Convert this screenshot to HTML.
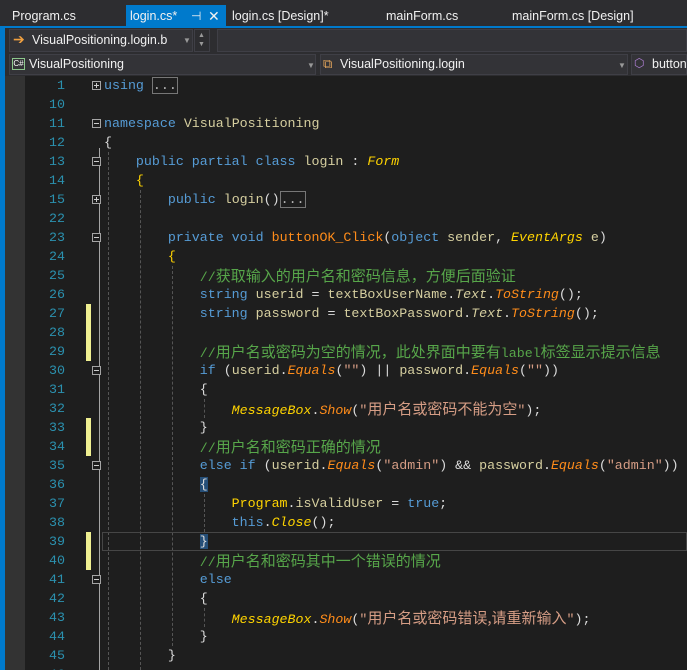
<!DOCTYPE html>
<html style="width:687px;height:670px;overflow:hidden"><head><meta charset="utf-8"><style>
*{margin:0;padding:0;box-sizing:border-box}
body{width:687px;height:670px;overflow:hidden;background:#1e1e1e;position:relative;font-family:"Liberation Sans","Noto Sans CJK SC",sans-serif}
.a{position:absolute}
.tab{position:absolute;top:5px;height:22px;font-size:12.5px;color:#f1f1f1;line-height:22px;white-space:nowrap}
.ln{position:absolute;left:20px;width:45px;text-align:right;color:#2b91af;font:13.3px/19px "Liberation Mono",monospace}
.cl{position:absolute;left:104px;font:13.3px/19px "Liberation Mono","Noto Sans CJK SC",monospace;color:#dcdcdc;white-space:pre}
.c{font-family:"Noto Sans CJK SC",sans-serif;font-size:15px}
.k{color:#569cd6}.v{color:#d6cfa0}.m{color:#ff8c1a;font-style:italic}.t{color:#ffd400;font-style:italic}.s{color:#d69d85}.g{color:#57a64a}.p{color:#b4b4b4}.y{color:#ffd400}
.f{position:absolute;left:92px;width:9px;height:9px;border:1px solid #a5a5a5;background:#1e1e1e}
.f:before{content:"";position:absolute;left:1px;top:3px;width:5px;height:1px;background:#ccc}
.f.pl:after{content:"";position:absolute;left:3px;top:1px;width:1px;height:5px;background:#ccc}
.ym{position:absolute;left:86px;width:5px;background:#efef91}
.gd{position:absolute;width:0;border-left:1px dashed #555}
.hb{background:#264f78}
</style></head><body>
<div class="a" style="left:0;top:0;width:687px;height:29px;background:#2d2d30"></div>
<div class="a" style="left:0;top:26px;width:687px;height:2px;background:#007acc"></div>
<div class="a" style="left:126px;top:5px;width:100px;height:22px;background:#007acc"></div>
<div class="tab" style="left:12px">Program.cs</div>
<div class="tab" style="left:130px">login.cs*</div>
<div class="tab" style="left:191px;font-size:12px">⊣</div>
<div class="tab" style="left:208px;font-size:14px">✕</div>
<div class="tab" style="left:232px">login.cs [Design]*</div>
<div class="tab" style="left:386px">mainForm.cs</div>
<div class="tab" style="left:512px">mainForm.cs [Design]</div>
<div class="a" style="left:0;top:28px;width:687px;height:48px;background:#2d2d30"></div>
<div class="a" style="left:0;top:28px;width:5px;height:642px;background:#007acc"></div>
<div class="a" style="left:9px;top:29px;width:184px;height:23px;border:1px solid #3f3f46;background:#333337"></div>
<div class="a" style="left:13px;top:31px;color:#f0a040;font-size:14px">➔</div>
<div class="a" style="left:32px;top:33px;width:141px;overflow:hidden;white-space:nowrap;color:#f1f1f1;font-size:12.5px">VisualPositioning.login.b</div>
<div class="a" style="left:183px;top:36px;color:#999;font-size:8px">▼</div>
<div class="a" style="left:194px;top:29px;width:16px;height:23px;border:1px solid #3f3f46;background:#2d2d30"></div>
<div class="a" style="left:198px;top:31px;color:#999;font-size:7px;line-height:9px">▲<br>▼</div>
<div class="a" style="left:217px;top:29px;width:470px;height:23px;border:1px solid #3f3f46;background:#333337"></div>
<div class="a" style="left:9px;top:54px;width:307px;height:21px;border:1px solid #3f3f46;background:#333337"></div>
<div class="a" style="left:12px;top:58px;width:13px;height:12px;border:1px solid #8cc88c;color:#fff;font-size:8px;line-height:10px;text-align:center">C#</div>
<div class="a" style="left:29px;top:57px;color:#f1f1f1;font-size:12.5px">VisualPositioning</div>
<div class="a" style="left:307px;top:61px;color:#999;font-size:8px">▼</div>
<div class="a" style="left:320px;top:54px;width:308px;height:21px;border:1px solid #3f3f46;background:#333337"></div>
<div class="a" style="left:323px;top:56px;color:#e8a85c;font-size:13px">⧉</div>
<div class="a" style="left:340px;top:57px;color:#f1f1f1;font-size:12.5px">VisualPositioning.login</div>
<div class="a" style="left:618px;top:61px;color:#999;font-size:8px">▼</div>
<div class="a" style="left:631px;top:54px;width:56px;height:21px;border:1px solid #3f3f46;background:#333337"></div>
<div class="a" style="left:634px;top:56px;color:#b180d7;font-size:12px">⬡</div>
<div class="a" style="left:652px;top:57px;color:#f1f1f1;font-size:12.5px;white-space:nowrap">button</div>
<div class="a" style="left:5px;top:76px;width:20px;height:594px;background:#333333"></div>
<div class="a" style="left:99px;top:148px;width:1px;height:522px;background:#a5a5a5"></div>
<div class="gd" style="left:108px;top:152px;height:518px"></div>
<div class="gd" style="left:140px;top:190px;height:480px"></div>
<div class="gd" style="left:172px;top:266px;height:380px"></div>
<div class="gd" style="left:204px;top:399px;height:19px"></div>
<div class="gd" style="left:204px;top:494px;height:38px"></div>
<div class="gd" style="left:204px;top:608px;height:19px"></div>
<div class="a" style="left:102px;top:532px;width:585px;height:19px;border:1px solid #464646"></div>
<div class="ym" style="top:304px;height:57px"></div>
<div class="ym" style="top:418px;height:38px"></div>
<div class="ym" style="top:532px;height:38px"></div>
<div class="ln" style="top:76px">1</div><div class="ln" style="top:95px">10</div><div class="ln" style="top:114px">11</div><div class="ln" style="top:133px">12</div><div class="ln" style="top:152px">13</div><div class="ln" style="top:171px">14</div><div class="ln" style="top:190px">15</div><div class="ln" style="top:209px">22</div><div class="ln" style="top:228px">23</div><div class="ln" style="top:247px">24</div><div class="ln" style="top:266px">25</div><div class="ln" style="top:285px">26</div><div class="ln" style="top:304px">27</div><div class="ln" style="top:323px">28</div><div class="ln" style="top:342px">29</div><div class="ln" style="top:361px">30</div><div class="ln" style="top:380px">31</div><div class="ln" style="top:399px">32</div><div class="ln" style="top:418px">33</div><div class="ln" style="top:437px">34</div><div class="ln" style="top:456px">35</div><div class="ln" style="top:475px">36</div><div class="ln" style="top:494px">37</div><div class="ln" style="top:513px">38</div><div class="ln" style="top:532px">39</div><div class="ln" style="top:551px">40</div><div class="ln" style="top:570px">41</div><div class="ln" style="top:589px">42</div><div class="ln" style="top:608px">43</div><div class="ln" style="top:627px">44</div><div class="ln" style="top:646px">45</div><div class="ln" style="top:665px">46</div>
<div class="f pl" style="top:81px"></div>
<div class="f" style="top:119px"></div>
<div class="f" style="top:157px"></div>
<div class="f pl" style="top:195px"></div>
<div class="f" style="top:233px"></div>
<div class="f" style="top:366px"></div>
<div class="f" style="top:461px"></div>
<div class="f" style="top:575px"></div>
<div class="cl" style="top:76px"><span class="k">using</span> <span class="p" style="border:1px solid #777">...</span></div>
<div class="cl" style="top:114px"><span class="k">namespace</span> <span class="v">VisualPositioning</span></div>
<div class="cl" style="top:133px">{</div>
<div class="cl" style="top:152px">    <span class="k">public partial class</span> <span class="v">login</span> : <span class="t">Form</span></div>
<div class="cl" style="top:171px">    <span class="y">{</span></div>
<div class="cl" style="top:190px">        <span class="k">public</span> <span class="v">login</span>()<span class="p" style="border:1px solid #777">...</span></div>
<div class="cl" style="top:228px">        <span class="k">private void</span> <span class="m" style="font-style:normal">buttonOK_Click</span>(<span class="k">object</span> <span class="v">sender</span>, <span class="t">EventArgs</span> <span class="v">e</span>)</div>
<div class="cl" style="top:247px">        <span class="y">{</span></div>
<div class="cl" style="top:266px">            <span class="g">//<span class="c">获取输入的用户名和密码信息，方便后面验证</span></span></div>
<div class="cl" style="top:285px">            <span class="k">string</span> <span class="v">userid</span> = <span class="v">textBoxUserName</span>.<span class="t" style="color:#d6cfa0">Text</span>.<span class="m">ToString</span>();</div>
<div class="cl" style="top:304px">            <span class="k">string</span> <span class="v">password</span> = <span class="v">textBoxPassword</span>.<span class="t" style="color:#d6cfa0">Text</span>.<span class="m">ToString</span>();</div>
<div class="cl" style="top:342px">            <span class="g">//<span class="c">用户名或密码为空的情况，此处界面中要有</span>label<span class="c">标签显示提示信息</span></span></div>
<div class="cl" style="top:361px">            <span class="k">if</span> (<span class="v">userid</span>.<span class="m">Equals</span>(<span class="s">""</span>) || <span class="v">password</span>.<span class="m">Equals</span>(<span class="s">""</span>))</div>
<div class="cl" style="top:380px">            {</div>
<div class="cl" style="top:399px">                <span class="t">MessageBox</span>.<span class="m">Show</span>(<span class="s">"<span class="c">用户名或密码不能为空</span>"</span>);</div>
<div class="cl" style="top:418px">            }</div>
<div class="cl" style="top:437px">            <span class="g">//<span class="c">用户名和密码正确的情况</span></span></div>
<div class="cl" style="top:456px">            <span class="k">else if</span> (<span class="v">userid</span>.<span class="m">Equals</span>(<span class="s">"admin"</span>) &amp;&amp; <span class="v">password</span>.<span class="m">Equals</span>(<span class="s">"admin"</span>))</div>
<div class="cl" style="top:475px">            <span class="hb">{</span></div>
<div class="cl" style="top:494px">                <span class="y">Program</span>.<span class="v">isValidUser</span> = <span class="k">true</span>;</div>
<div class="cl" style="top:513px">                <span class="k">this</span>.<span class="t">Close</span>();</div>
<div class="cl" style="top:532px">            <span class="hb">}</span></div>
<div class="cl" style="top:551px">            <span class="g">//<span class="c">用户名和密码其中一个错误的情况</span></span></div>
<div class="cl" style="top:570px">            <span class="k">else</span></div>
<div class="cl" style="top:589px">            {</div>
<div class="cl" style="top:608px">                <span class="t">MessageBox</span>.<span class="m">Show</span>(<span class="s">"<span class="c">用户名或密码错误,请重新输入</span>"</span>);</div>
<div class="cl" style="top:627px">            }</div>
<div class="cl" style="top:646px">        }</div>
</body></html>
